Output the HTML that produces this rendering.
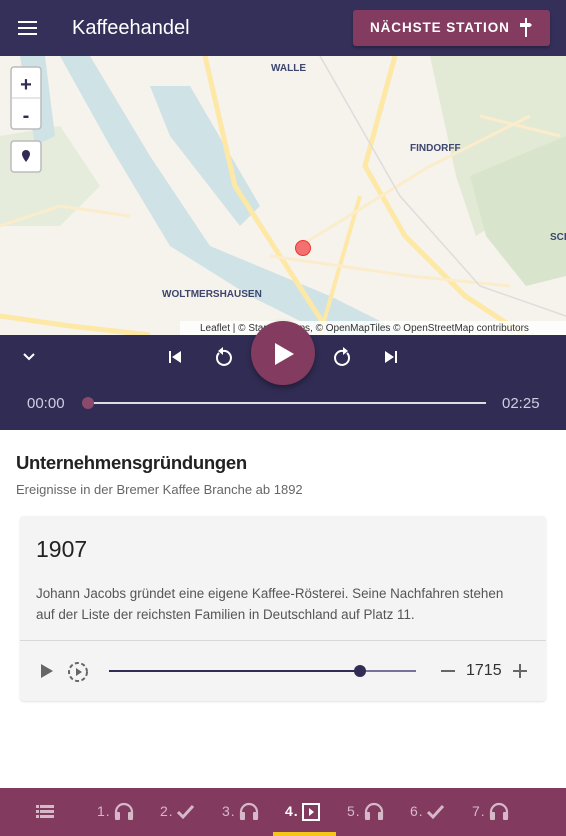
<!DOCTYPE html>
<html><head><meta charset="utf-8"><style>
*{margin:0;padding:0;box-sizing:border-box}
body{width:566px;height:836px;overflow:hidden;font-family:"Liberation Sans",sans-serif;background:#fff;position:relative}
.abs{position:absolute}
.hdr{left:0;top:0;width:566px;height:56px;background:#35305a}
.btn{left:353px;top:10px;width:197px;height:36px;background:#843b60;border-radius:3px;box-shadow:0 2px 3px rgba(0,0,0,.3);color:#fff;font-size:13.5px;letter-spacing:.9px;font-weight:bold;line-height:36px;padding-left:17px;white-space:nowrap}
.player{left:0;top:335px;width:566px;height:95px;background:#312c54}
.nav{left:0;top:788px;width:566px;height:48px;background:#823a5f}
.nl{color:#d6b9c8;font-size:14px;top:803px;letter-spacing:1px}
</style></head><body>
<div class="abs hdr"></div>
<svg class="abs" style="left:18px;top:20px" width="20" height="16"><rect y="1" width="19" height="2" fill="#fff"/><rect y="7" width="19" height="2" fill="#fff"/><rect y="13" width="19" height="2" fill="#fff"/></svg>
<div class="abs" style="left:72px;top:17px;color:#fff;font-size:20px">Kaffeehandel</div>
<div class="abs btn">NÄCHSTE STATION</div>
<svg class="abs" style="left:520px;top:18px" width="14" height="20"><rect x="5" y="0" width="2" height="19" fill="#fff"/><path d="M0 5h10l2 2-2 2H0z" fill="#fff"/></svg>

<svg class="abs" style="left:0;top:56px" width="566" height="279">
<rect width="566" height="279" fill="#f6f2ec"/>
<path d="M430 0h136v80l-30 60-60 40-20-60z" fill="#e2ead6"/>
<path d="M470 120l96-40v140l-40 10-40-50z" fill="#d8e5cc"/>
<path d="M0 80l60-10 40 60-40 40-60 0z" fill="#e6ecdc"/>
<path d="M60 0h30l60 100 60 90 120 50 80 40H330l-80-40-80-50-60-100z" fill="#cfe3e6"/>
<path d="M150 30l40 0 70 120-20 20-70-90z" fill="#cfe3e6"/>
<path d="M20 0h25l10 80-20 10z" fill="#cfe3e6"/>
<path d="M205 0l30 130 90 140" stroke="#fde8a6" stroke-width="5" fill="none"/>
<path d="M395 0l-30 110 40 70 60 60 60 39" stroke="#fde8a6" stroke-width="5" fill="none"/>
<path d="M360 140l-40 139" stroke="#fde8a6" stroke-width="4" fill="none"/>
<path d="M0 260l70 10 80 9" stroke="#fde8a6" stroke-width="5" fill="none"/>
<path d="M270 200l140 20 100 10M0 170l60-20 70 10M300 190l130-80 100-50M480 60l80 20" stroke="#fbeccc" stroke-width="3" fill="none"/>
<path d="M320 0l80 140 80 90 86 30" stroke="#ddd" stroke-width="1.5" fill="none"/>
<text x="271" y="15" font-size="10" font-weight="bold" fill="#3c466e" font-family="Liberation Sans">WALLE</text>
<text x="410" y="95" font-size="10" font-weight="bold" fill="#3c466e" font-family="Liberation Sans">FINDORFF</text>
<text x="162" y="241" font-size="10" font-weight="bold" fill="#3c466e" font-family="Liberation Sans">WOLTMERSHAUSEN</text>
<text x="550" y="184" font-size="10" font-weight="bold" fill="#3c466e" font-family="Liberation Sans">SCI</text>
<circle cx="303" cy="192" r="7.5" fill="#f2706d" stroke="#e33" stroke-width="1"/>
<rect x="11" y="11" width="30" height="62" rx="3" fill="#fff" stroke="#bbb" stroke-width="1.5"/>
<line x1="11" y1="42" x2="41" y2="42" stroke="#ccc"/>
<text x="26" y="35" font-size="20" font-weight="bold" text-anchor="middle" fill="#312c54" font-family="Liberation Sans">+</text>
<text x="26" y="66" font-size="20" font-weight="bold" text-anchor="middle" fill="#312c54" font-family="Liberation Sans">-</text>
<rect x="11" y="85" width="30" height="31" rx="3" fill="#fff" stroke="#bbb" stroke-width="1.5"/>
<path d="M26 94a4 4 0 0 1 4 4c0 3-4 8-4 8s-4-5-4-8a4 4 0 0 1 4-4z" fill="#312c54"/>
<rect x="180" y="265" width="386" height="14" fill="rgba(255,255,255,.8)"/>
<text x="200" y="275" font-size="10" fill="#333" font-family="Liberation Sans">Leaflet | © Stamen Maps, © OpenMapTiles © OpenStreetMap contributors</text>
</svg>

<div class="abs player"></div>
<svg class="abs" style="left:22px;top:352px" width="14" height="10"><path d="M2 2l5 5 5-5" stroke="#fff" stroke-width="2" fill="none"/></svg>
<svg class="abs" style="left:168px;top:350px" width="14" height="14"><rect x="1" y="1" width="2" height="12" fill="#fff"/><path d="M13 1v12L4 7z" fill="#fff"/></svg>
<svg class="abs" style="left:212px;top:345px" width="22" height="24"><path d="M7 8a7 7 0 1 0 4-2" stroke="#fff" stroke-width="2" fill="none"/><path d="M11 2v8l-5-4z" fill="#fff"/></svg>
<div class="abs" style="left:251px;top:321px;width:64px;height:64px;border-radius:50%;background:#843b60;box-shadow:0 3px 6px rgba(0,0,0,.35)"></div>
<svg class="abs" style="left:274px;top:342px" width="22" height="24"><path d="M1 1l19 11L1 23z" fill="#fff"/></svg>
<svg class="abs" style="left:332px;top:345px" width="22" height="24"><path d="M15 8a7 7 0 1 1-4-2" stroke="#fff" stroke-width="2" fill="none"/><path d="M11 2v8l5-4z" fill="#fff"/></svg>
<svg class="abs" style="left:384px;top:350px" width="14" height="14"><rect x="11" y="1" width="2" height="12" fill="#fff"/><path d="M1 1v12l9-6z" fill="#fff"/></svg>
<div class="abs" style="left:27px;top:395px;color:#cfcde0;font-size:15px">00:00</div>
<div class="abs" style="left:502px;top:395px;color:#cfcde0;font-size:15px">02:25</div>
<div class="abs" style="left:86px;top:402px;width:400px;height:2px;background:#ddd"></div>
<div class="abs" style="left:82px;top:397px;width:12px;height:12px;border-radius:50%;background:#8b4a6c"></div>

<div class="abs" style="left:16px;top:452px;font-size:18.5px;color:#222;font-weight:bold;letter-spacing:-.3px">Unternehmensgründungen</div>
<div class="abs" style="left:16px;top:482px;font-size:13px;color:#666">Ereignisse in der Bremer Kaffee Branche ab 1892</div>
<div class="abs" style="left:20px;top:516px;width:526px;height:185px;background:#f4f4f4;border-radius:4px;box-shadow:0 1px 2px rgba(0,0,0,.12)"></div>
<div class="abs" style="left:36px;top:536px;font-size:23px;color:#222">1907</div>
<div class="abs" style="left:36px;top:583px;font-size:13.4px;color:#555;line-height:21px;white-space:nowrap">Johann Jacobs gründet eine eigene Kaffee-Rösterei. Seine Nachfahren stehen<br>auf der Liste der reichsten Familien in Deutschland auf Platz 11.</div>
<div class="abs" style="left:20px;top:640px;width:526px;height:1px;background:#d8d8d8"></div>
<svg class="abs" style="left:40px;top:663px" width="14" height="16"><path d="M1 1l12 7-12 7z" fill="#666"/></svg>
<svg class="abs" style="left:66px;top:660px" width="24" height="24"><circle cx="12" cy="12" r="9" stroke="#666" stroke-width="2" stroke-dasharray="4 2.5" fill="none"/><path d="M10 8v8l6-4z" fill="#666"/></svg>
<div class="abs" style="left:109px;top:670px;width:251px;height:2px;background:#312c54"></div>
<div class="abs" style="left:360px;top:670px;width:56px;height:2px;background:#77739a"></div>
<div class="abs" style="left:354px;top:665px;width:12px;height:12px;border-radius:50%;background:#312c54"></div>
<div class="abs" style="left:441px;top:670px;width:14px;height:2px;background:#666"></div>
<div class="abs" style="left:466px;top:662px;font-size:16px;color:#333">1715</div>
<div class="abs" style="left:513px;top:670px;width:14px;height:2px;background:#666"></div>
<div class="abs" style="left:519px;top:664px;width:2px;height:14px;background:#666"></div>

<div class="abs nav"></div>
<svg class="abs" style="left:36px;top:804px" width="18" height="16"><g fill="#d6b9c8"><rect x="0" y="1" width="3" height="3"/><rect x="4" y="1" width="14" height="3"/><rect x="0" y="6" width="3" height="3"/><rect x="4" y="6" width="14" height="3"/><rect x="0" y="11" width="3" height="3"/><rect x="4" y="11" width="14" height="3"/></g></svg>
<div class="abs nl" style="left:97px">1.</div>
<div class="abs nl" style="left:160px">2.</div>
<div class="abs nl" style="left:222px">3.</div>
<div class="abs nl" style="left:285px;color:#fff;font-weight:bold">4.</div>
<div class="abs nl" style="left:347px">5.</div>
<div class="abs nl" style="left:410px">6.</div>
<div class="abs nl" style="left:472px">7.</div>
<svg class="abs" style="left:0;top:788px" width="566" height="48">
<defs><g id="hp"><path d="M1 16v-6a8 8 0 0 1 16 0v6" stroke="#d6b9c8" stroke-width="2.2" fill="none"/><rect x="0" y="10" width="5" height="8" rx="1" fill="#d6b9c8"/><rect x="13" y="10" width="5" height="8" rx="1" fill="#d6b9c8"/></g>
<path id="ck" d="M1 9l5 5L16 3" stroke="#d6b9c8" stroke-width="3" fill="none"/></defs>
<use href="#hp" x="115" y="14"/>
<use href="#ck" x="177" y="15"/>
<use href="#hp" x="240" y="14"/>
<rect x="303" y="16" width="16" height="16" stroke="#fff" stroke-width="2" fill="none"/><path d="M309 20v8l5-4z" fill="#fff"/>
<use href="#hp" x="365" y="14"/>
<use href="#ck" x="427" y="15"/>
<use href="#hp" x="490" y="14"/>
<rect x="273" y="44" width="63" height="4" fill="#f5c518"/>
</svg>
</body></html>
